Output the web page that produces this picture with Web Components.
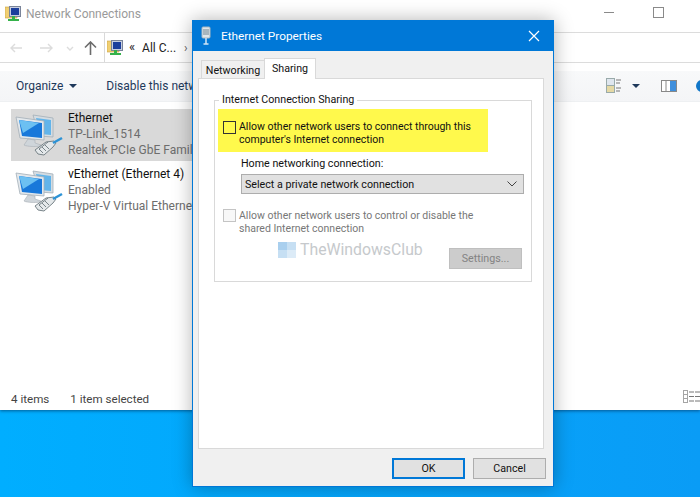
<!DOCTYPE html>
<html>
<head>
<meta charset="utf-8">
<style>
  html, body { margin: 0; height: 100%; }
  body { width: 700px; height: 497px; overflow: hidden; position: relative; font: 12px Roboto, "Liberation Sans", sans-serif; background: linear-gradient(90deg, #00aeff, #0a9cf6); }
</style>
</head>
<body>
<explorer-window>
  <net-item selected name="Ethernet" status="TP-Link_1514" device="Realtek PCIe GbE Family Controller"></net-item>
  <net-item name="vEthernet (Ethernet 4)" status="Enabled" device="Hyper-V Virtual Ethernet Adapter"></net-item>
</explorer-window>
<properties-dialog></properties-dialog>

<script>
const netIcon = `
<svg width="48" height="44" viewBox="0 0 48 44">
  <path d="M18 1 L38 4 V23 L24 22Z" fill="#d4dce2" stroke="#a3aeb7" stroke-width=".8"/>
  <path d="M21 4 L36 6 V21 L25 20Z" fill="#62b4ea"/>
  <path d="M1 3 L29 7 V26 L5 24Z" fill="#e3e8ec" stroke="#a3aeb7" stroke-width=".8"/>
  <path d="M4 6 L27 9 V24 L7 22Z" fill="#1878da"/>
  <path d="M4 6 L24 9 L8 19Z" fill="#6cc0f2"/>
  <path d="M13 25 l7 1 v3 l6 2 c1 2 -14 2 -17 0 Z" fill="#cfd5da" stroke="#a7afb6" stroke-width=".6"/>
  <path d="M20 36 l11 -8 8 -1 2 2 -3 4 -9 8 -6 -1Z" fill="#e4e8ea" stroke="#6c787e" stroke-width=".9"/>
  <path d="M24 35 l4 4 M27 33 l4 4 M30 31 l4 4 M24 35 l9 -7" stroke="#5d6a70" stroke-width=".8" fill="none"/>
  <path d="M38 29 l9 -5" stroke="#2d93d6" stroke-width="2.500"/>
</svg>`;
const addrIcon = `
<svg width="17" height="17" viewBox="0 0 17 17">
  <path d="M0 2h6l1 1h5v10H0Z" fill="#f0cf72" stroke="#c9a23f" stroke-width=".6"/>
  <rect x="4.500" y="1.500" width="11" height="10" fill="#c8cfe0" stroke="#7a8499"/>
  <rect x="6" y="3" width="8" height="7" fill="#1c3f9c"/>
  <rect x="3" y="14" width="11" height="2" fill="#35b24a"/>
  <rect x="7" y="11" width="3" height="4" fill="#35b24a"/>
</svg>`;

class NetItem extends HTMLElement {
  constructor() {
    super();
    this.attachShadow({ mode: 'open' });
  }
  connectedCallback() {
    this.shadowRoot.innerHTML = `
      <style>
        :host { display: flex; gap: 5px; width: 177px; height: 52px; margin-left: 11px; padding-left: 4px; overflow: hidden; align-items: center; white-space: nowrap; line-height: 16px; }
        :host([selected]) { background: #d9d9d9; }
        svg { flex: none; margin-top: 1px; }
        .txt { margin-top: -3px; }
        .name { color: #111; }
        .sub { color: #6d6d6d; }
      </style>
      ${netIcon}
      <div class="txt">
        <div class="name">${this.getAttribute('name')}</div>
        <div class="sub">${this.getAttribute('status')}</div>
        <div class="sub">${this.getAttribute('device')}</div>
      </div>`;
  }
}
customElements.define('net-item', NetItem);

class ExplorerWindow extends HTMLElement {
  constructor() {
    super();
    this.attachShadow({ mode: 'open' });
    this.shadowRoot.innerHTML = `
      <style>
        :host { display: flex; flex-direction: column; height: 410px; background: #fff; box-shadow: 0 1px 3px rgba(0,40,80,.6); color: #111; position: relative; }
        .title { height: 33px; flex: none; display: flex; align-items: center; padding: 0 0 5px 5px; gap: 4px; color: #9a9a9a; border-bottom: 1px solid #dcdcdc; box-sizing: border-box; }
        .title span { flex: 1; }
        .min { width: 10px; height: 1px; background: #8a8a8a; margin: -3px 35px 0 0; }
        .max { width: 9px; height: 9px; border: 1px solid #8a8a8a; margin: -3px 36px 0 0; }
        .nav { height: 30px; flex: none; display: flex; align-items: center; border-bottom: 1px solid #dcdcdc; box-sizing: border-box; padding-left: 10px; }
        .nav svg { flex: none; }
        .addr { flex: 1; height: 100%; margin-left: 7px; border-left: 1px solid #d9d9d9; display: flex; align-items: center; padding-left: 2px; color: #222; white-space: nowrap; }
        .tools { height: 30px; flex: none; margin-top: 8px; background: linear-gradient(#f8f9fa, #f4f5f7); display: flex; align-items: center; padding-left: 16px; color: #1e395b; border-bottom: 1px solid #eef0f2; white-space: nowrap; }
        .caret { width: 0; height: 0; border: 4px solid transparent; border-top: 4px solid #1e395b; border-bottom: 0; }
        .list { flex: 1; padding-top: 7px; display: flex; flex-direction: column; gap: 4px; }
        .status { height: 24px; flex: none; display: flex; align-items: center; padding: 2px 0 0 11px; box-sizing: border-box; gap: 21px; color: #444; font-size: 11.600px; }
        .status svg { margin-left: auto; margin-top: -6px; }
      </style>
      <div class="title">${addrIcon}<span>Network Connections</span><i class="min"></i><i class="max"></i></div>
      <div class="nav">
        <svg width="74" height="16" viewBox="0 0 74 16" fill="none" stroke-width="1.4" stroke="#dcdcdc">
          <path d="M12 8H1M5 4L1 8l4 4M30 8h12M38 4l4 4-4 4"/>
          <path d="M57 7l3 3 3-3"/>
        </svg>
        <svg width="13" height="14" viewBox="0 0 13 14" fill="none" stroke="#6c6c6c" stroke-width="1.6"><path d="M6.5 14V1M1 6.5l5.500-5.500 5.500 5.500"/></svg>
        <div class="addr">${addrIcon}
          <span style="margin:-3px 0 0 5px;font-size:13px">«</span>
          <span style="margin-left:7px">All C...</span>
          <span style="margin-left:8px;color:#666">›</span>
        </div>
      </div>
      <div class="tools">
        <span>Organize</span><i class="caret" style="margin-left:6px"></i>
        <span style="margin-left:29px">Disable this network device</span>
        <svg width="94" height="18" viewBox="0 0 94 18" style="margin-left:auto;flex:none">
          <rect x=".5" y="1.500" width="8" height="7" fill="#dfe6ee" stroke="#9aa"/><rect x=".5" y="8.500" width="8" height="7" fill="#e5d9a5" stroke="#9aa"/>
          <path d="M10 3h5M10 6h4M10 11h5M10 14h4" stroke="#777"/>
          <path d="M26 7h8l-4 4Z" fill="#1e395b"/>
          <rect x="55.500" y="3.500" width="15" height="11" fill="#fff" stroke="#888"/><rect x="64" y="4" width="6" height="10" fill="#3f8fdc"/><path d="M60 4v10" stroke="#888"/>
          <circle cx="96" cy="9" r="6" fill="#1277c9"/>
        </svg>
      </div>
      <div class="list"><slot></slot></div>
      <div class="status"><span>4 items</span><span>1 item selected</span>
        <svg width="17" height="13" viewBox="0 0 17 13" fill="none"><rect x=".5" y=".5" width="4" height="12" stroke="#a5a5a5"/><path d="M1 4.500h3M1 8.500h3" stroke="#a5a5a5"/><path d="M6 2h5M12 2h5M6 6.500h5M12 6.500h5M6 11h5M12 11h5" stroke="#777"/></svg>
      </div>`;
  }
}
customElements.define('explorer-window', ExplorerWindow);

class WinButton extends HTMLElement {
  constructor() {
    super();
    this.attachShadow({ mode: 'open' });
    this.shadowRoot.innerHTML = `
      <style>
        :host { display: flex; align-items: center; justify-content: center; width: 73px; height: 21px; box-sizing: border-box; background: #e1e1e1; border: 1px solid #adadad; color: #111; }
        :host([primary]) { border: 2px solid #0078d7; }
        :host([disabled]) { background: #ccc; border-color: #bfbfbf; color: #838383; }
      </style>
      <slot></slot>`;
  }
}
customElements.define('win-button', WinButton);

class WinCheck extends HTMLElement {
  constructor() {
    super();
    this.attachShadow({ mode: 'open' });
    this.shadowRoot.innerHTML = `
      <style>
        :host { display: flex; gap: 3px; line-height: 13px; color: #111; white-space: nowrap; font-size: 10.500px; }
        :host([disabled]) { color: #777; }
        i { flex: none; width: 11px; height: 11px; border: 1px solid #333; margin-top: 1px; }
        :host([disabled]) i { border-color: #c4c4c4; background: #f8f8f8; margin-top: 0; }
      </style>
      <i></i><div><slot></slot></div>`;
  }
}
customElements.define('win-check', WinCheck);

class PropertiesDialog extends HTMLElement {
  constructor() {
    super();
    this.attachShadow({ mode: 'open' });
    this.shadowRoot.innerHTML = `
      <style>
        :host { position: absolute; left: 192px; top: 20px; width: 362px; height: 467px; box-sizing: border-box; display: flex; flex-direction: column; background: #f0f0f0; border: 1px solid #0078d7; border-top: 0; box-shadow: 0 0 18px rgba(0,0,0,.3); font-size: 10.7px; color: #111; }
        .bar { height: 31px; flex: none; background: #0078d7; color: #fff; display: flex; align-items: center; padding: 0 13px 0 8px; gap: 10px; font-size: 11.800px; }
        .bar span { flex: 1; }
        .tabs { display: flex; align-items: flex-end; height: 27px; flex: none; margin-left: 7px; position: relative; z-index: 1; }
        .tab { height: 18px; width: 64px; display: flex; align-items: center; justify-content: center; background: #f0f0f0; border: 1px solid #d9d9d9; border-bottom: 0; box-sizing: border-box; margin-left: 1px; padding-top: 1px; }
        .tab.on { height: 21px; width: 52px; margin: 0 0 -1px -1px; background: #fff; padding: 0 0 1px; }
        .panel { height: 371px; flex: none; margin: 0 9px 0 5px; background: #fff; border: 1px solid #d9d9d9; box-sizing: border-box; padding: 16px 11px 0 15px; }
        fieldset { margin: 0; border: 1px solid #d9d9d9; height: 187px; box-sizing: border-box; padding: 0 0 0 3px; display: flex; flex-direction: column; }
        legend { margin-left: 1px; padding: 0 3px; line-height: 10px; height: 10px; }
        .mark { background: #fff94c; margin-top: 4px; height: 43px; width: 270px; box-sizing: border-box; padding: 11px 0 0 5px; }
        .label { margin: 5px 0 0 23px; line-height: 14px; }
        .select { margin: 3px 7px 0 23px; height: 20px; background: #e1e1e1; border: 1px solid #adadad; box-sizing: border-box; display: flex; align-items: center; justify-content: space-between; padding: 0 6px 0 3px; }
        .second { margin: 15px 0 0 5px; }
        .lower { position: relative; display: flex; justify-content: flex-end; margin: 13px 9px 0 0; }
        .mark-logo { position: absolute; left: 60px; top: -8px; display: flex; align-items: center; gap: 4px; color: #c6c9cc; font-size: 15.800px; white-space: nowrap; }
        .foot { flex: 1; display: flex; justify-content: flex-end; gap: 8px; padding: 9px 7px 0 0; }
      </style>
      <div class="bar">
        <svg width="10" height="20" viewBox="0 0 10 20"><rect x="1" y="1" width="8" height="11" rx="1" fill="#dfe6ea" stroke="#a9b7bf"/><path d="M3 3v6M5 3v6M7 3v6" stroke="#6f8592"/><path d="M5 12v6M2.500 18h5" stroke="#cfe4f5" stroke-width="1.500"/></svg>
        <span>Ethernet Properties</span>
        <svg width="12" height="12" viewBox="0 0 12 12" stroke="#fff" stroke-width="1.200"><path d="M1 1l10 10M11 1L1 11"/></svg>
      </div>
      <div class="tabs"><div class="tab">Networking</div><div class="tab on">Sharing</div></div>
      <div class="panel">
        <fieldset>
          <legend>Internet Connection Sharing</legend>
          <div class="mark"><win-check>Allow other network users to connect through this<br>computer's Internet connection</win-check></div>
          <div class="label">Home networking connection:</div>
          <div class="select"><span>Select a private network connection</span>
            <svg width="10" height="6" viewBox="0 0 10 6" fill="none" stroke="#444"><path d="M.5.5L5 5 9.500.5"/></svg>
          </div>
          <win-check disabled class="second">Allow other network users to control or disable the<br>shared Internet connection</win-check>
          <div class="lower">
            <div class="mark-logo">
              <svg width="18" height="16" viewBox="0 0 18 16"><path d="M0 0h9v8H0Z" fill="#a9cfee"/><path d="M9 0h9v8H9Z" fill="#c6dff3"/><path d="M0 8h9v8H0Z" fill="#c6dff3"/><path d="M9 8h9v8H9Z" fill="#dcebf7"/></svg>
              <span>TheWindowsClub</span>
            </div>
            <win-button disabled>Settings...</win-button>
          </div>
        </fieldset>
      </div>
      <div class="foot"><win-button primary>OK</win-button><win-button>Cancel</win-button></div>`;
  }
}
customElements.define('properties-dialog', PropertiesDialog);
</script>
</body>
</html>
